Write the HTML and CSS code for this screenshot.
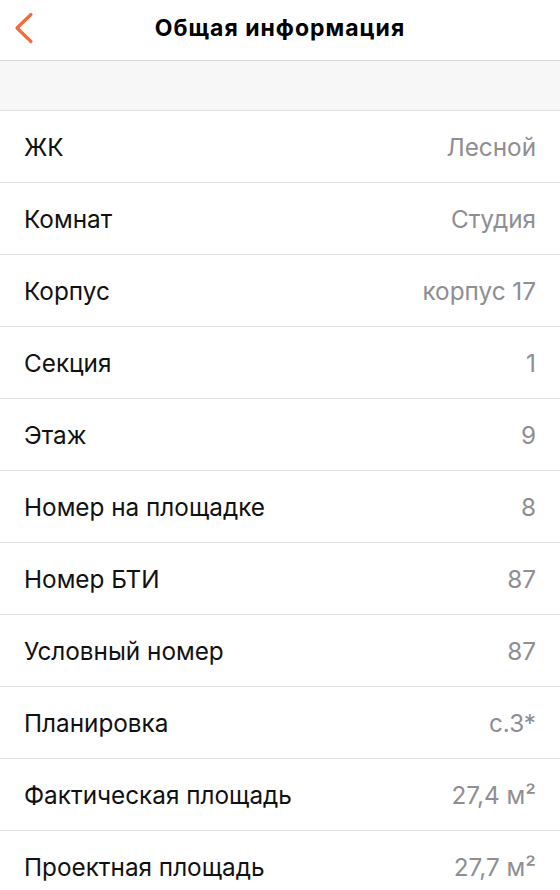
FILE: index.html
```html
<!DOCTYPE html>
<html lang="ru">
<head>
<meta charset="utf-8">
<link rel="stylesheet" href="styles.css">
</head>
<body>
<header class="nav">
  <button class="back" aria-label="Назад">
    <svg width="20" height="32" viewBox="0 0 20 32"><path d="M17 2.5 L3 16 L17 29.5" fill="none" stroke="#ef6d3b" stroke-width="3.2" stroke-linecap="round" stroke-linejoin="round"/></svg>
  </button>
  <h1 class="title">Общая информация</h1>
</header>
<div class="gap"></div>
<ul class="list">
  <li class="row"><span class="label">ЖК</span><span class="value">Лесной</span></li>
  <li class="row"><span class="label">Комнат</span><span class="value">Студия</span></li>
  <li class="row"><span class="label">Корпус</span><span class="value">корпус 17</span></li>
  <li class="row"><span class="label">Секция</span><span class="value">1</span></li>
  <li class="row"><span class="label">Этаж</span><span class="value">9</span></li>
  <li class="row"><span class="label">Номер на площадке</span><span class="value">8</span></li>
  <li class="row"><span class="label">Номер БТИ</span><span class="value">87</span></li>
  <li class="row"><span class="label">Условный номер</span><span class="value">87</span></li>
  <li class="row"><span class="label">Планировка</span><span class="value">с.3*</span></li>
  <li class="row"><span class="label">Фактическая площадь</span><span class="value">27,4 м²</span></li>
  <li class="row"><span class="label">Проектная площадь</span><span class="value">27,7 м²</span></li>
</ul>
</body>
</html>
```

FILE: styles.css
```css
* { box-sizing: border-box; }
html, body { margin: 0; padding: 0; background: #fff; }
body {
  font-family: Inter, "Liberation Sans", Arial, sans-serif;
  color: #111;
  width: 560px;
  height: 890px;
  overflow: hidden;
}
.nav {
  height: 61px;
  border-bottom: 1px solid #d6d6d6;
  display: flex;
  align-items: center;
  justify-content: center;
  position: relative;
}
.back {
  position: absolute;
  left: 14px;
  top: 11px;
  border: 0;
  background: none;
  padding: 0;
  width: 22px;
  height: 34px;
  display: flex;
  align-items: center;
}
.title {
  margin: 0;
  font-size: 23px;
  font-weight: 650;
  letter-spacing: 1px;
  color: #000;
  padding-bottom: 4px;
}
.gap {
  height: 50px;
  background: #f7f7f7;
  border-bottom: 1px solid #e0e0e0;
}
.list { list-style: none; margin: 0; padding: 0; }
.row {
  height: 72px;
  border-bottom: 1px solid #e3e3e3;
  display: flex;
  align-items: center;
  justify-content: space-between;
  padding: 1px 24px 0 24px;
  font-size: 24.3px;
}
.label { color: #111; }
.value { color: #8e8e93; }
```
